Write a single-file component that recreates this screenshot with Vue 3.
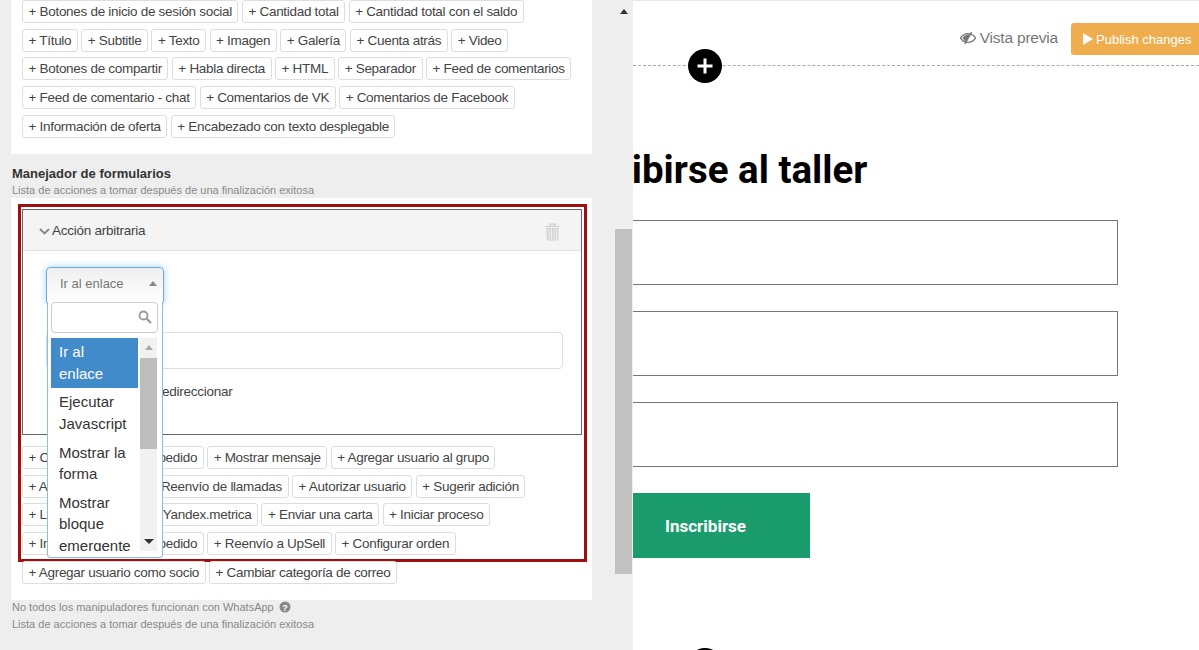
<template>
  <div class="page">
    <!-- left editor pane -->
    <aside class="editor">
      <div class="editor-scroll">
        <section class="panel blocks">
          <div v-for="(row, i) in blockRows" :key="i" class="chip-row">
            <span v-for="c in row" :key="c" class="chip">+ {{ c }}</span>
          </div>
        </section>

        <h4 class="section-title">Manejador de formularios</h4>
        <p class="hint sub">Lista de acciones a tomar después de una finalización exitosa</p>

        <section class="panel handlers">
          <div class="highlight">
            <div class="action">
              <div class="action-head">
                <svg class="chevron" width="11" height="7" viewBox="0 0 11 7"><path d="M1 1l4.5 4.5L10 1" fill="none" stroke="#888" stroke-width="1.9" /></svg>
                <span>Acción arbitraria</span>
                <svg class="trash" width="15" height="18" viewBox="0 0 15 18">
                  <path d="M5 3V1.2h5V3M0.5 3.5h14" fill="none" stroke="#ccc" stroke-width="1.2" />
                  <path d="M1.5 5h12v12.5h-12z" fill="#d4d4d4" />
                  <path d="M4 6v10.5M6.5 6v10.5M9 6v10.5M11.5 6v10.5" stroke="#f4f4f4" stroke-width="0.9" />
                </svg>
              </div>
              <div class="action-body">
                <div class="select-wrap">
                  <div class="select">
                    <span>Ir al enlace</span>
                    <i class="caret-up"></i>
                  </div>
                  <div class="dropdown">
                    <div class="search">
                      <svg width="14" height="14" viewBox="0 0 14 14"><circle cx="5.5" cy="5.5" r="4" fill="none" stroke="#999" stroke-width="1.8" /><path d="M8.5 8.5l4.5 4.5" stroke="#999" stroke-width="2.2" /></svg>
                    </div>
                    <div class="list">
                      <ul>
                        <li v-for="(o, i) in options" :key="o" :class="{ active: i === 0 }">{{ o }}</li>
                      </ul>
                      <div class="list-bar">
                        <i class="bar-up"></i>
                        <div class="bar-thumb"></div>
                        <i class="bar-down"></i>
                      </div>
                    </div>
                  </div>
                </div>
                <div class="url-input"></div>
                <label class="redirect">Tiempo antes de redireccionar</label>
              </div>
            </div>
            <div class="handler-chips">
              <div v-for="(row, i) in handlerRows" :key="i" class="chip-row">
                <span v-for="c in row" :key="c" class="chip">+ {{ c }}</span>
              </div>
            </div>
          </div>
          <div class="chip-row last-row">
            <span class="chip">+ Agregar usuario como socio</span>
            <span class="chip">+ Cambiar categoría de correo</span>
          </div>
        </section>

        <p class="hint note">
          No todos los manipuladores funcionan con WhatsApp
          <svg width="12" height="12" viewBox="0 0 12 12"><circle cx="6" cy="6" r="5.5" fill="#888" /><text x="6" y="9.5" text-anchor="middle" font-size="9" font-weight="700" font-family="Liberation Sans" fill="#fff">?</text></svg>
        </p>
        <p class="hint">Lista de acciones a tomar después de una finalización exitosa</p>
      </div>
      <div class="scrollbar">
        <i class="sb-up"></i>
        <div class="sb-thumb"></div>
      </div>
    </aside>

    <!-- right preview pane -->
    <main class="preview">
      <div class="toolbar">
        <span class="view">
          <svg width="16" height="14" viewBox="0 0 16 14">
            <path d="M0.5 7C2.5 4 5 2.6 8 2.6S13.5 4 15.5 7C13.5 10 11 11.4 8 11.4S2.5 10 0.5 7z" fill="none" stroke="#777" stroke-width="1.3" />
            <path d="M2.5 7C4 4.4 7 3 10.5 3.2L6 10.5C4.6 9.8 3.4 8.6 2.5 7z" fill="#777" />
            <path d="M11.5 1L5 13" stroke="#777" stroke-width="1.5" />
          </svg>
          Vista previa
        </span>
        <button class="publish"><i class="play"></i>Publish changes</button>
      </div>
      <div class="divider">
        <span class="add">
          <svg width="20" height="20" viewBox="0 0 20 20"><path d="M10 2.5v15M2.5 10h15" stroke="#fff" stroke-width="3" /></svg>
        </span>
      </div>
      <form class="form" @submit.prevent>
        <h1>Inscribirse al taller</h1>
        <div class="field"></div>
        <div class="field"></div>
        <div class="field"></div>
        <button class="submit">Inscribirse</button>
      </form>
      <span class="add add-bottom"></span>
    </main>
  </div>
</template>

<script setup>
const blockRows = [
  ['Botones de inicio de sesión social', 'Cantidad total', 'Cantidad total con el saldo'],
  ['Título', 'Subtitle', 'Texto', 'Imagen', 'Galería', 'Cuenta atrás', 'Video'],
  ['Botones de compartir', 'Habla directa', 'HTML', 'Separador', 'Feed de comentarios'],
  ['Feed de comentario - chat', 'Comentarios de VK', 'Comentarios de Facebook'],
  ['Información de oferta', 'Encabezado con texto desplegable']
]

const handlerRows = [
  ['Cambiar estados de pedido', 'Mostrar mensaje', 'Agregar usuario al grupo'],
  ['Agregar eventos', 'Reenvío de llamadas', 'Autorizar usuario', 'Sugerir adición'],
  ['Llamar', 'Metas de Yandex.metrica', 'Enviar una carta', 'Iniciar proceso'],
  ['Imprimir estados del pedido', 'Reenvío a UpSell', 'Configurar orden']
]

const options = ['Ir al enlace', 'Ejecutar Javascript', 'Mostrar la forma', 'Mostrar bloque emergente']
</script>

<style>
html, body {
  margin: 0;
  height: 100%;
  overflow: hidden;
  background: #fff;
}
</style>

<style scoped>
.page {
  display: flex;
  width: 1199px;
  height: 650px;
  overflow: hidden;
  font-family: "Liberation Sans", Arial, sans-serif;
}

/* editor */
.editor {
  display: flex;
  flex: 0 0 633px;
  height: 650px;
  background: #eee;
  color: #333;
  overflow: hidden;
}

.editor-scroll {
  flex: 0 0 615px;
  min-width: 0;
  box-sizing: border-box;
  padding-left: 11px;
  padding-right: 23px;
}

.scrollbar {
  flex: 0 0 18px;
  display: flex;
  flex-direction: column;
  align-items: center;
}

.sb-up {
  width: 0;
  height: 0;
  margin-top: 9px;
  border-left: 4px solid transparent;
  border-right: 4px solid transparent;
  border-bottom: 5px solid #333;
}

.sb-thumb {
  align-self: flex-start;
  width: 17px;
  height: 345px;
  margin-top: 215px;
  background: #c1c1c1;
}

.panel {
  background: #fff;
  padding: 0 11px;
}

.blocks {
  box-sizing: border-box;
  height: 154px;
  display: flex;
  flex-direction: column;
  gap: 5.7px;
}

.chip-row {
  display: flex;
  gap: 3.5px;
}

.chip {
  display: flex;
  align-items: center;
  box-sizing: border-box;
  height: 23px;
  padding: 0 5.5px;
  border: 1px solid #ddd;
  border-radius: 3px;
  background: #fff;
  font-size: 13.5px;
  letter-spacing: -0.3px;
  color: #444;
  white-space: nowrap;
}

.section-title {
  margin: 12px 0 0 1px;
  font-size: 13px;
  line-height: 15px;
  font-weight: 700;
  color: #333;
}

.hint {
  margin: 3px 0 0 1px;
  font-size: 11px;
  line-height: 14px;
  color: #888;
}

.hint.sub {
  margin-top: 2px;
}

.handlers {
  box-sizing: border-box;
  height: 402px;
  margin-top: 1px;
  padding: 6px 0 0 7px;
}

.highlight {
  box-sizing: border-box;
  width: 569px;
  height: 358px;
  padding: 2px 1px 0;
  border: 3px solid #a00f0f;
}

.action {
  box-sizing: border-box;
  width: 560px;
  height: 226px;
  border: 1px solid #666;
}

.action-head {
  display: flex;
  align-items: center;
  height: 41px;
  box-sizing: border-box;
  padding: 0 21px 0 16px;
  background: #f4f4f4;
  border-bottom: 1px solid #e3e3e3;
  font-size: 13.5px;
  letter-spacing: -0.25px;
  color: #444;
}

.chevron {
  margin-right: 2px;
  margin-top: 2px;
}

.trash {
  margin-left: auto;
  margin-top: 3px;
}

.action-body {
  position: relative;
  padding: 16px 18px 0 23px;
}

.select-wrap {
  position: relative;
  width: 118px;
  height: 36px;
  z-index: 3;
}

.select {
  display: flex;
  align-items: center;
  justify-content: space-between;
  box-sizing: border-box;
  height: 36px;
  padding: 0 6px 3px 13px;
  border: 1px solid #66afe9;
  border-radius: 4px 4px 0 0;
  background: linear-gradient(#eee, #fff);
  box-shadow: 0 0 7px rgba(102, 175, 233, 0.6);
  font-size: 13px;
  color: #777;
}

.caret-up {
  width: 0;
  height: 0;
  border-left: 4px solid transparent;
  border-right: 4px solid transparent;
  border-bottom: 5px solid #888;
}

.dropdown {
  position: absolute;
  left: 1px;
  top: 35px;
  box-sizing: border-box;
  width: 116px;
  height: 256px;
  padding: 0 3px;
  border: 1px solid #8dbde2;
  border-top: 0;
  border-radius: 0 0 4px 4px;
  background: #fff;
  overflow: hidden;
}

.search {
  display: flex;
  align-items: center;
  justify-content: flex-end;
  box-sizing: border-box;
  width: 107px;
  height: 31px;
  padding-right: 5px;
  padding-bottom: 2px;
  border: 1px solid #ccc;
  border-radius: 4px;
}

.list {
  display: flex;
  height: 213px;
  margin-top: 5px;
  overflow: hidden;
}

.list ul {
  flex: 0 0 87px;
  min-width: 0;
  margin: 0;
  padding: 0;
  list-style: none;
}

.list li {
  padding: 3px 8px 4.25px;
  font-size: 15px;
  line-height: 21.5px;
  color: #333;
}

.list li.active {
  background: #428bca;
  color: #fff;
}

.list-bar {
  flex: 0 0 17px;
  margin-left: 2px;
  display: flex;
  flex-direction: column;
  align-items: center;
  background: #f1f1f1;
}

.bar-up {
  width: 0;
  height: 0;
  margin-top: 7px;
  border-left: 4px solid transparent;
  border-right: 4px solid transparent;
  border-bottom: 5px solid #aaa;
}

.bar-thumb {
  width: 17px;
  height: 91px;
  margin-top: 8px;
  background: #bdbdbd;
}

.bar-down {
  width: 0;
  height: 0;
  margin-top: auto;
  margin-bottom: 7px;
  border-left: 5px solid transparent;
  border-right: 5px solid transparent;
  border-top: 5px solid #333;
}

.url-input {
  box-sizing: border-box;
  height: 37px;
  margin-top: 29px;
  border: 1px solid #ddd;
  border-radius: 4px;
}

.redirect {
  display: block;
  margin-top: 15px;
  padding-left: 12px;
  font-size: 13.5px;
  line-height: 16px;
  letter-spacing: -0.25px;
  color: #444;
}

.handler-chips {
  display: flex;
  flex-direction: column;
  gap: 5.7px;
  margin-top: 11px;
}

.last-row {
  margin: -1px 0 0 4px;
}

.note svg {
  vertical-align: -2px;
  margin-left: 2px;
}

.hint.note {
  margin-top: 0;
}

/* preview */
.preview {
  position: relative;
  flex: 1;
  min-width: 0;
  height: 650px;
  box-sizing: border-box;
  border-top: 1px solid #e8e8e8;
  overflow: hidden;
  background: #fff;
}

.toolbar {
  display: flex;
  justify-content: flex-end;
  align-items: center;
  gap: 13px;
  height: 32px;
  margin-top: 22px;
  margin-right: -10px;
}

.view {
  display: flex;
  align-items: center;
  gap: 4px;
  font-size: 15.5px;
  letter-spacing: -0.2px;
  color: #777;
  padding-bottom: 2px;
}

.publish {
  display: flex;
  align-items: center;
  width: 138px;
  height: 32px;
  padding: 0 0 0 12px;
  border: 0;
  border-radius: 3px;
  background: #f0ad4e;
  color: #fff;
  font-family: inherit;
  font-size: 13px;
  white-space: nowrap;
}

.play {
  width: 0;
  height: 0;
  margin-right: 3px;
  border-top: 6px solid transparent;
  border-bottom: 6px solid transparent;
  border-left: 10px solid #fff;
}

.divider {
  position: relative;
  margin-top: 10px;
  border-top: 1px dashed #aaa;
}

.add {
  display: flex;
  align-items: center;
  justify-content: center;
  width: 34px;
  height: 34px;
  border-radius: 50%;
  background: #000;
}

.divider .add {
  position: absolute;
  left: 55px;
  top: -17px;
}

.add-bottom {
  position: absolute;
  left: 55px;
  top: 647px;
}

.form {
  display: flex;
  flex-direction: column;
  width: 601px;
  margin-left: -116px;
  font-family: Roboto, "Liberation Sans", sans-serif;
}

.form h1 {
  margin: 82px 0 0 28px;
  font-size: 38.5px;
  line-height: 44px;
  font-weight: 700;
  color: #000;
  white-space: nowrap;
}

.field {
  box-sizing: border-box;
  height: 65px;
  margin-top: 26px;
  border: 1px solid #777;
  background: #fff;
}

.form h1 + .field {
  margin-top: 28px;
}

.submit {
  box-sizing: border-box;
  width: 293px;
  height: 65px;
  margin-top: 26px;
  padding: 0 0 0 148px;
  border: 0;
  background: #1a9c6c;
  color: #fff;
  font-family: inherit;
  font-size: 17px;
  font-weight: 700;
  text-align: left;
}
</style>
